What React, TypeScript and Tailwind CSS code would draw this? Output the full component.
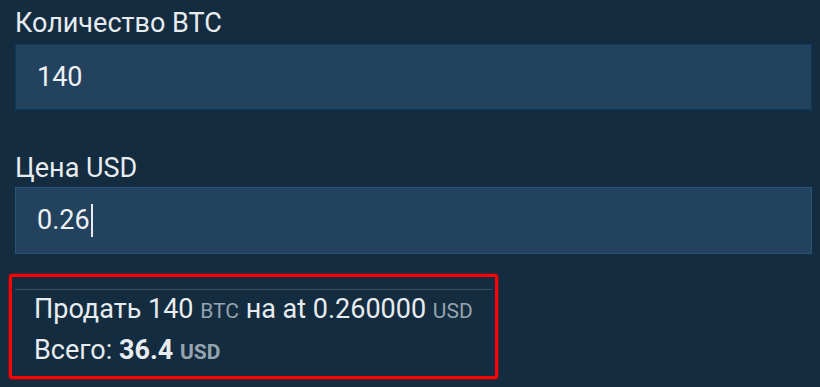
export default function App() {
  return (
    <div className="h-[387px] w-[820px] overflow-hidden bg-[#142c40] px-[15px] pt-[8px] font-['Roboto',sans-serif] text-[#e8ecef]">
      <label className="block text-[27px] leading-[30px]">Количество BTC</label>
      <div className="mt-[6px] flex h-[66px] w-[797px] items-center border border-[#0f3a5f] bg-[#22425e] px-[21px] text-[27px] text-[#eef1f3]">
        140
      </div>

      <label className="mt-[43px] block text-[27px] leading-[30px]">Цена USD</label>
      <div className="mt-[4px] flex h-[67px] w-[797px] items-center border border-[#2b5578] bg-[#22425e] px-[21px] text-[27px] text-[#eef1f3]">
        0.26
        <span className="ml-px inline-block h-[33px] w-[2px] bg-[#e8ecef]" />
      </div>

      <div className="ml-[-6px] mt-[20px] h-[105px] w-[489px] rounded-[3px] border-[3px] border-[#ff0000] px-[3px] pt-[12px] shadow-[0_0_2px_#ff0000]">
        <div className="border-t border-[#3a4e5f] pl-[19px]">
          <p className="whitespace-nowrap text-[27px] leading-[39px]">
            Продать 140 <span className="text-[21px] text-[#97a3ad]">BTC</span> на at 0.260000{" "}
            <span className="text-[21px] text-[#97a3ad]">USD</span>
          </p>
          <p className="whitespace-nowrap text-[27px] leading-[39px]">
            Всего: <span className="font-bold">36.4</span>{" "}
            <span className="text-[21px] font-bold text-[#97a3ad]">USD</span>
          </p>
        </div>
      </div>
    </div>
  );
}
